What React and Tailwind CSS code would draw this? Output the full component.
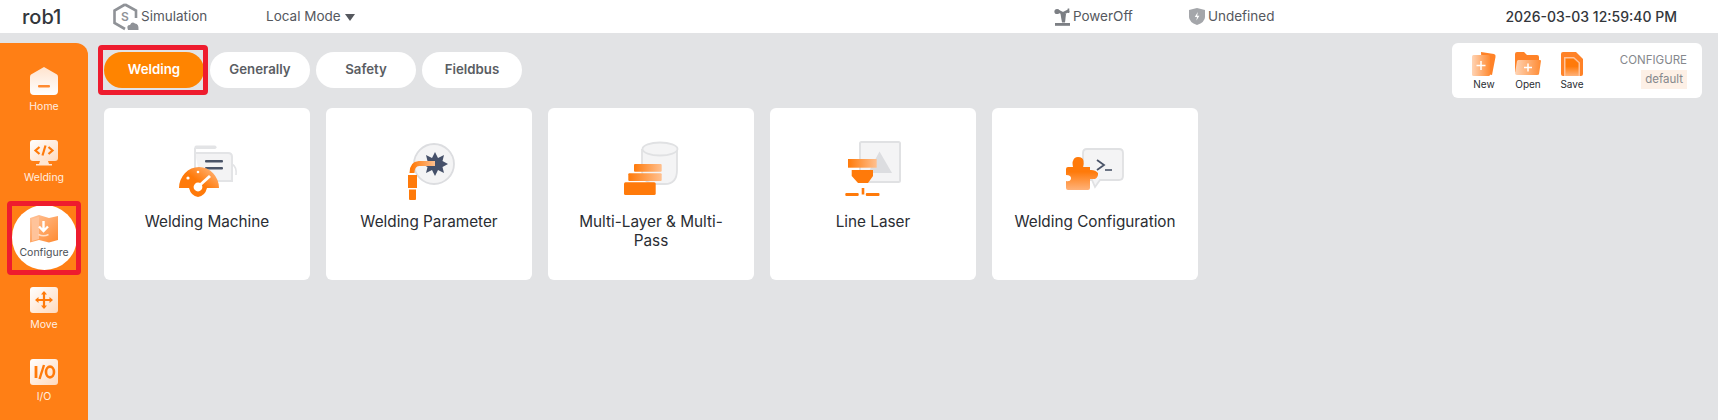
import React from "react";

const tabs = ["Welding", "Generally", "Safety", "Fieldbus"];

// gradients shared by the icons
const Defs = () => (
  <svg className="absolute h-0 w-0">
    <defs>
      <linearGradient id="nav" x1="0" y1="0" x2="0" y2="1">
        <stop offset="0" stopColor="#ffe3cd" />
        <stop offset="1" stopColor="#ffffff" />
      </linearGradient>
      <linearGradient id="navSide" x1="0" y1="0" x2="1" y2="1">
        <stop offset="0" stopColor="#ffffff" />
        <stop offset="1" stopColor="#ffd9bd" />
      </linearGradient>
      <linearGradient id="hot" x1="0" y1="1" x2="1" y2="0">
        <stop offset="0.5" stopColor="#ff7a0a" />
        <stop offset="1" stopColor="#ffc08f" />
      </linearGradient>
      <linearGradient id="pipe" x1="0" y1="0" x2="1" y2="0">
        <stop offset="0" stopColor="#ff7a0a" />
        <stop offset="1" stopColor="#ffc08f" />
      </linearGradient>
      <linearGradient id="down" x1="0" y1="0" x2="0" y2="1">
        <stop offset="0.45" stopColor="#ff7a0a" />
        <stop offset="1" stopColor="#ffb27a" />
      </linearGradient>
      <linearGradient id="fade" x1="0" y1="0" x2="1" y2="1">
        <stop offset="0" stopColor="#ffc39a" />
        <stop offset="1" stopColor="#ff8a30" />
      </linearGradient>
      <linearGradient id="fadeLeft" x1="1" y1="0" x2="0" y2="0">
        <stop offset="0" stopColor="#ff8b33" />
        <stop offset="1" stopColor="#ffd4b5" />
      </linearGradient>
    </defs>
  </svg>
);

const HomeIcon = () => (
  <svg width="28" height="28" viewBox="0 0 28 28">
    <path d="M14 0 L27 7.5 Q28 8 28 10 V24 Q28 28 24 28 H4 Q0 28 0 24 V10 Q0 8 1 7.5 Z" fill="url(#nav)" />
    <rect x="8" y="18" width="12" height="2.4" rx="1" fill="#ff8a30" />
  </svg>
);

const WeldingIcon = () => (
  <svg width="28" height="26" viewBox="0 0 28 26">
    <rect x="0" y="0" width="28" height="21" rx="3" fill="url(#navSide)" />
    <path d="M10 21 H18 L19 24 H22 V25.5 H6 V24 H9 Z" fill="#ffe6d3" />
    <path d="M9.5 7 L5.5 10.5 L9.5 14 M18.5 7 L22.5 10.5 L18.5 14" fill="none" stroke="#ff7a0a" strokeWidth="2.2" />
    <path d="M15.5 5.5 L12.5 15.5" stroke="#ff7a0a" strokeWidth="2.2" />
  </svg>
);

const ConfigureIcon = () => (
  <svg width="30" height="28" viewBox="0 0 30 28">
    <path d="M1 3 L10 0 L20 3 L29 1 V25 L20 27.5 L10 25 L1 27.5 Z" fill="url(#fade)" />
    <path d="M3 4 L10 1.5 V24 L3 26 Z" fill="#ffc39a" />
    <path d="M14.5 6 V15 M10 11.5 L14.5 16 L19 11.5" fill="none" stroke="#fff" strokeWidth="2.4" />
    <path d="M9.5 19.5 Q14.5 22 19.5 19.5" fill="none" stroke="#ffe0c8" strokeWidth="1.4" />
  </svg>
);

const MoveIcon = () => (
  <svg width="28" height="26" viewBox="0 0 28 26">
    <rect width="28" height="26" rx="3" fill="url(#navSide)" />
    <path d="M14 5 V21 M6 13 H22" stroke="#ff7a0a" strokeWidth="2.2" />
    <path d="M11 7.5 L14 4 L17 7.5 Z M11 18.5 L14 22 L17 18.5 Z M8.5 10 L5 13 L8.5 16 Z M19.5 10 L23 13 L19.5 16 Z" fill="#ff7a0a" />
  </svg>
);

const IoIcon = () => (
  <svg width="28" height="26" viewBox="0 0 28 26">
    <rect width="28" height="26" rx="3" fill="url(#navSide)" />
    <path d="M6 7 V19" stroke="#ff7a0a" strokeWidth="2.8" />
    <path d="M14 6 L9.5 20" stroke="#ff7a0a" strokeWidth="2.4" />
    <ellipse cx="20" cy="13" rx="4" ry="5.4" fill="none" stroke="#ff7a0a" strokeWidth="2.6" />
  </svg>
);

const MachineIcon = () => (
  <svg width="64" height="64" viewBox="0 0 64 64">
    <rect x="19.5" y="5.5" width="22" height="3.4" rx="1.7" fill="#e3e4e6" />
    <path d="M20 8 V30 M20 13 H53 Q57 13 57 17 V41 H26" fill="#f3f3f4" stroke="#e3e4e6" strokeWidth="2" />
    <path d="M57 24 Q62 27 61 35" fill="none" stroke="#e3e4e6" strokeWidth="1.6" />
    <rect x="30" y="20" width="18" height="2.6" rx="1" fill="#4a5468" />
    <rect x="30" y="27" width="18" height="2.6" rx="1" fill="#4a5468" />
    <path d="M4 48 A20 21 0 0 1 44 48 H32 Q30 56 23 57 Q16 56 14 48 Z" fill="url(#hot)" />
    <path d="M35 36 L25 45" stroke="#fff" strokeWidth="3" />
    <circle cx="23" cy="47" r="4.4" fill="#fff" />
    <circle cx="13" cy="38" r="1.6" fill="#fff" />
    <circle cx="23" cy="32" r="1.3" fill="#fff" />
  </svg>
);

const ParameterIcon = () => (
  <svg width="64" height="64" viewBox="0 0 64 64">
    <circle cx="37" cy="24" r="20" fill="#f4f4f5" stroke="#dcdde0" strokeWidth="1.8" />
    <path d="M38 12 L41 18 L47 15 L45.5 21 L51 24 L45.5 27 L47 33 L41 30 L38 36 L35 30 L29 33 L30.5 27 L25 24 L30.5 21 L29 15 L35 18 Z" fill="#46516a" />
    <path d="M38 23.5 H22 Q15 24 15 33" fill="none" stroke="url(#pipe)" strokeWidth="5" />
    <path d="M11 35 H20 V48 H11 Z" fill="#ff7a0a" />
    <path d="M12 49.5 H19 V59 Q19 60 18 60 H13 Q12 60 12 59 Z" fill="#ff7a0a" />
  </svg>
);

const LayerIcon = () => (
  <svg width="64" height="64" viewBox="0 0 64 64">
    <path d="M23 9 V30 Q23 44 38 44 H46 Q58 44 58 30 V9" fill="#f4f4f5" stroke="#e0e1e3" strokeWidth="1.8" />
    <ellipse cx="41" cy="9" rx="17.5" ry="6.5" fill="#f4f4f5" stroke="#e0e1e3" strokeWidth="1.8" />
    <rect x="15" y="24" width="27.7" height="7.7" rx="1" fill="url(#pipe)" />
    <rect x="9.3" y="33.3" width="33.4" height="7.7" rx="1" fill="url(#pipe)" />
    <rect x="5" y="42.3" width="31.7" height="12.7" rx="1.5" fill="#ff7a0a" />
  </svg>
);

const LaserIcon = () => (
  <svg width="64" height="64" viewBox="0 0 64 64">
    <rect x="19" y="2" width="40" height="40" rx="1.5" fill="#f4f4f5" stroke="#e0e1e3" strokeWidth="2" />
    <path d="M38.5 11.5 L51 33 H27 Z" fill="#dcdde0" />
    <rect x="7" y="19" width="28.7" height="8.7" fill="url(#pipe)" />
    <path d="M10.7 30 H32 V36 L27 43 H17 L10.7 36 Z" fill="#ff7a0a" />
    <rect x="20.7" y="48" width="2.6" height="6.5" fill="#ff7a0a" />
    <rect x="4.3" y="53" width="13.4" height="3" rx="1" fill="#ff7a0a" />
    <rect x="24.8" y="53" width="13.7" height="3" rx="1" fill="#ff7a0a" />
  </svg>
);

const ConfigCardIcon = () => (
  <svg width="64" height="64" viewBox="0 0 64 64">
    <path d="M24 9 H56 Q60 9 60 13 V36 Q60 40 56 40 H37 L32 47 L29 40 H24 Q20 40 20 36 V13 Q20 9 24 9 Z" fill="#f4f4f5" stroke="#e0e1e3" strokeWidth="1.8" />
    <path d="M34 20 L41 25 L34 30" fill="none" stroke="#4a5468" strokeWidth="1.8" />
    <path d="M42 30 H49" stroke="#4a5468" strokeWidth="1.6" />
    <path d="M10 27 Q9 22 10 21 Q11 17 15 17 Q20 17 20.5 21 Q21 24 20 27 H27 V30 Q32 29.5 35 33 Q35.5 37 32 39 H27 V48 Q27 50 25 50 H5 Q3 50 3 48 V41 Q7 42 8 39 Q8.5 35 3 35 V29 Q3 27 5 27 Z" fill="url(#down)" />
  </svg>
);

const NewIcon = () => (
  <svg width="24" height="26" viewBox="0 0 24 26">
    <path d="M9 1 L22 3 Q24 3.5 23.5 6 L20 24 L10 22 Z" fill="#ff8227" />
    <rect x="0" y="4" width="18" height="21" rx="1.5" fill="url(#fadeLeft)" />
    <path d="M9 10 V19 M4.5 14.5 H13.5" stroke="#fff" strokeWidth="1.5" />
  </svg>
);

const OpenIcon = () => (
  <svg width="26" height="24" viewBox="0 0 26 24">
    <path d="M0 2 Q0 0 2 0 H9 L12 3 H22 Q24 3 24 5 V20 H0 Z" fill="#ff8227" />
    <path d="M3 8 H25 Q26 8 26 9 L24 22 Q24 23 22 23 H2 Q0 23 0 21 L2 9 Z" fill="url(#fadeLeft)" />
    <path d="M13 11.5 V19.5 M9 15.5 H17" stroke="#fff" strokeWidth="1.5" />
  </svg>
);

const SaveIcon = () => (
  <svg width="22" height="24" viewBox="0 0 22 24">
    <path d="M2 0 H15 L22 7 V22 Q22 24 20 24 H2 Q0 24 0 22 V2 Q0 0 2 0 Z" fill="#ff8227" />
    <path d="M3 5 H13 L19 10.5 V24 H3 Z" fill="#ffc39a" />
    <path d="M4.5 6.5 H12.5 L17.5 11 V24 H4.5 Z" fill="url(#down)" />
  </svg>
);

const SimIcon = () => (
  <svg width="26" height="28" viewBox="0 0 26 28">
    <path d="M12 1.5 L23 7.5 V15 M12 26 L1.5 20 V7.5 L12 1.5" fill="none" stroke="#8f9297" strokeWidth="2.6" />
    <text x="12" y="18" textAnchor="middle" fontSize="12" fontWeight="600" fill="#8f9297" fontFamily="Inter, sans-serif">S</text>
    <path d="M15 27 Q13 22 17 22 Q19 18 22 20.5 Q26 20.5 25.5 27 Z" fill="#8f9297" />
  </svg>
);

const RobotIcon = () => (
  <svg width="18" height="18" viewBox="0 0 18 18">
    <path d="M3 2.5 L9 5.5 L15 2.5" fill="none" stroke="#7c7f84" strokeWidth="2.8" />
    <path d="M14.5 0.5 V5" stroke="#7c7f84" strokeWidth="1.6" />
    <circle cx="3" cy="3.5" r="2.6" fill="#7c7f84" />
    <path d="M6.5 6 H12 L11 14.5 H8 Z" fill="#7c7f84" />
    <rect x="1" y="15" width="15" height="2.8" fill="#7c7f84" />
  </svg>
);

const ShieldIcon = () => (
  <svg width="16" height="17" viewBox="0 0 16 17">
    <path d="M8 0 L16 2 V9 Q16 14 8 17 Q0 14 0 9 V2 Z" fill="#a4a6aa" />
    <path d="M8.8 4 L5.8 9 H8 L7.4 12.5 L10.4 7.8 H8.2 Z" fill="#fff" />
  </svg>
);

const NavItem = ({ label, icon, active, className }) => (
  <div className={`flex h-[72px] items-center justify-center ${className || ""}`}>
    <div
      className={`flex h-[65px] w-[65px] flex-col items-center justify-center rounded-full text-[10.5px] leading-[14px] ${
        active ? "bg-white text-[#4b4f55]" : "text-[#ffeee0]"
      }`}
    >
      {icon}
      <span className={active ? "mt-[3px]" : "mt-[5px]"}>{label}</span>
    </div>
  </div>
);

const Card = ({ icon, title }) => (
  <div className="flex h-[172px] w-[206px] flex-col items-center rounded-md bg-white px-4 pt-[32px] text-center text-[15.3px] leading-[19px] text-[#2a2d33]">
    {icon}
    <div className="mt-[8px]">{title}</div>
  </div>
);

const Action = ({ icon, label }) => (
  <div className="flex w-[44px] flex-col items-center">
    <div className="flex h-[27px] items-center">{icon}</div>
    <span className="mt-[1px] text-[10px] leading-[13px] text-[#2a2d33]">{label}</span>
  </div>
);

export default function App() {
  return (
    <div className="flex h-screen flex-col overflow-hidden bg-[#e2e3e5] font-['Inter',sans-serif]">
      <Defs />
      {/* top bar */}
      <header className="flex h-[33px] shrink-0 items-center bg-white text-[13.5px] text-[#55585e]">
        <span className="ml-[22px] w-[91px] text-[20px] font-medium text-[#33363b]">rob1</span>
        <SimIcon />
        <span className="ml-[2px] w-[125px]">Simulation</span>
        <span>Local Mode</span>
        <span className="ml-[4px] mt-[1px] h-0 w-0 border-x-[5px] border-t-[7px] border-x-transparent border-t-[#55585e]" />
        <div className="ml-auto flex items-center">
          <RobotIcon />
          <span className="ml-[1px] w-[116px]">PowerOff</span>
          <ShieldIcon />
          <span className="ml-[3px]">Undefined</span>
          <span className="ml-[231px] mr-[41px] text-[14px] font-medium text-[#33363b]">2026-03-03 12:59:40 PM</span>
        </div>
      </header>

      <div className="flex min-h-0 flex-1">
        {/* side nav */}
        <nav className="relative mt-[10px] w-[88px] shrink-0 rounded-tr-xl bg-[#ff7f15] pt-[11px]">
          <NavItem label="Home" icon={<HomeIcon />} />
          <NavItem label="Welding" icon={<WeldingIcon />} className="mb-[3px]" />
          <NavItem label="Configure" icon={<ConfigureIcon />} active />
          <NavItem label="Move" icon={<MoveIcon />} />
          <NavItem label="I/O" icon={<IoIcon />} />
          <div className="absolute left-[7px] top-[158px] h-[74px] w-[74px] rounded-sm border-[5px] border-[#ee1c2e]" />
        </nav>

        <main className="relative min-w-0 flex-1 pl-[16px] pt-[19px]">
          <div className="flex gap-[6px]">
            {tabs.map((tab, i) => (
              <div
                key={tab}
                className={`flex h-[36px] w-[100px] items-center justify-center rounded-full text-[13.25px] font-semibold ${
                  i === 0 ? "bg-[#ff8400] text-white" : "bg-white text-[#5a5d63]"
                }`}
              >
                {tab}
              </div>
            ))}
          </div>
          <div className="absolute left-[10px] top-[12px] h-[50px] w-[110px] rounded-sm border-[5px] border-[#ee1c2e]" />

          <div className="mt-[20px] flex gap-[16px]">
            <Card icon={<MachineIcon />} title="Welding Machine" />
            <Card icon={<ParameterIcon />} title="Welding Parameter" />
            <Card icon={<LayerIcon />} title="Multi-Layer & Multi-Pass" />
            <Card icon={<LaserIcon />} title="Line Laser" />
            <Card icon={<ConfigCardIcon />} title="Welding Configuration" />
          </div>

          {/* config panel, floats over the top right of the content */}
          <div className="absolute right-[16px] top-[10px] flex h-[55px] w-[250px] items-center rounded-md bg-white pl-[10px] pr-[15px]">
            <Action icon={<NewIcon />} label="New" />
            <Action icon={<OpenIcon />} label="Open" />
            <Action icon={<SaveIcon />} label="Save" />
            <div className="ml-auto flex flex-col items-end text-[11.5px] text-[#85888d]">
              <span className="leading-[14px]">CONFIGURE</span>
              <span className="mt-[3px] bg-[#fdf0e6] px-[4px] leading-[19px]">default</span>
            </div>
          </div>
        </main>
      </div>
    </div>
  );
}
